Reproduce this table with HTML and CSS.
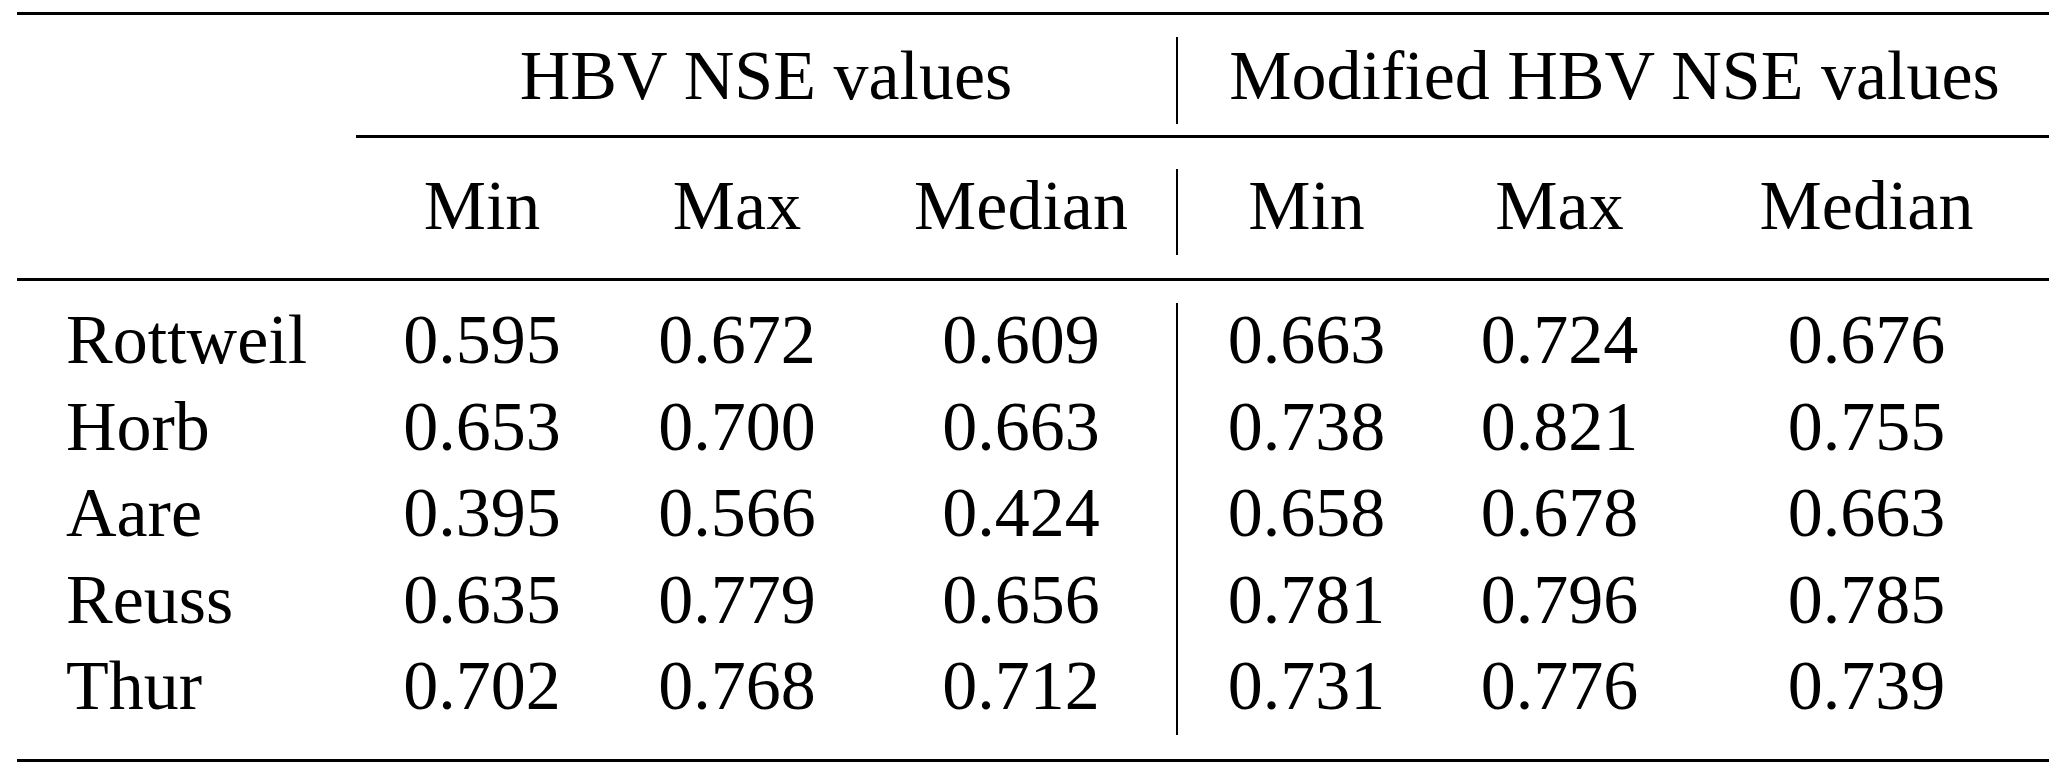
FILE: index.html
```html
<!DOCTYPE html>
<html lang="en">
<head>
<meta charset="utf-8">
<title>HBV NSE values</title>
<link rel="stylesheet" href="styles.css">
</head>
<body>
<div class="tbl">
  <div class="rule heavy"></div>

  <div class="sect h1">
    <div class="label"></div>
    <div class="grp left span">HBV NSE values</div>
    <div class="grp right span">Modified HBV NSE values</div>
  </div>

  <div class="cmid"></div>

  <div class="sect h2">
    <div class="label"></div>
    <div class="grp left cols-l">
      <div>Min</div><div>Max</div><div>Median</div>
    </div>
    <div class="grp right cols-r">
      <div>Min</div><div>Max</div><div>Median</div>
    </div>
  </div>

  <div class="rule heavy"></div>

  <div class="sect data">
    <div class="label rows">
      <div>Rottweil</div><div>Horb</div><div>Aare</div><div>Reuss</div><div>Thur</div>
    </div>
    <div class="grp left cols-l rows">
      <div>0.595</div><div>0.672</div><div>0.609</div>
      <div>0.653</div><div>0.700</div><div>0.663</div>
      <div>0.395</div><div>0.566</div><div>0.424</div>
      <div>0.635</div><div>0.779</div><div>0.656</div>
      <div>0.702</div><div>0.768</div><div>0.712</div>
    </div>
    <div class="grp right cols-r rows">
      <div>0.663</div><div>0.724</div><div>0.676</div>
      <div>0.738</div><div>0.821</div><div>0.755</div>
      <div>0.658</div><div>0.678</div><div>0.663</div>
      <div>0.781</div><div>0.796</div><div>0.785</div>
      <div>0.731</div><div>0.776</div><div>0.739</div>
    </div>
  </div>

  <div class="rule heavy"></div>
</div>
</body>
</html>
```

FILE: styles.css
```css
html, body {
  margin: 0;
  padding: 0;
  background: #ffffff;
}

body {
  font-family: "Liberation Serif", "Times New Roman", serif;
  font-size: 70px;
  color: #000000;
}

.tbl {
  width: 2032px;
  margin: 12px 0 0 17px;
}

.rule {
  background: #000000;
}

.rule.heavy {
  height: 3px;
}

.cmid {
  height: 3px;
  margin-left: 339px;
  background: #000000;
}

.sect {
  display: flex;
  align-items: stretch;
}

.label {
  width: 339px;
  padding-left: 49px;
  box-sizing: border-box;
  flex: none;
}

.grp {
  flex: none;
  text-align: center;
  white-space: nowrap;
}

.grp.left {
  width: 820px;
}

.grp.right {
  width: 873px;
  border-left: 2px solid #000000;
}

.cols-l {
  display: grid;
  grid-template-columns: 252px 258px 310px;
}

.cols-r {
  display: grid;
  grid-template-columns: 257px 249px 365px;
}

/* header row 1 */
.h1 {
  padding: 22px 0 11px;
}

.h1 .grp {
  line-height: 77px;
  padding-bottom: 10px;
}

/* header row 2 */
.h2 {
  padding: 31px 0 23px;
}

.h2 .grp {
  line-height: 74px;
  padding-bottom: 12px;
}

/* data rows */
.data {
  padding: 22px 0 24px;
}

.rows {
  line-height: 74px;
  row-gap: 12.5px;
  padding-bottom: 12px;
}

.label.rows {
  display: flex;
  flex-direction: column;
  gap: 12.5px;
}
```
